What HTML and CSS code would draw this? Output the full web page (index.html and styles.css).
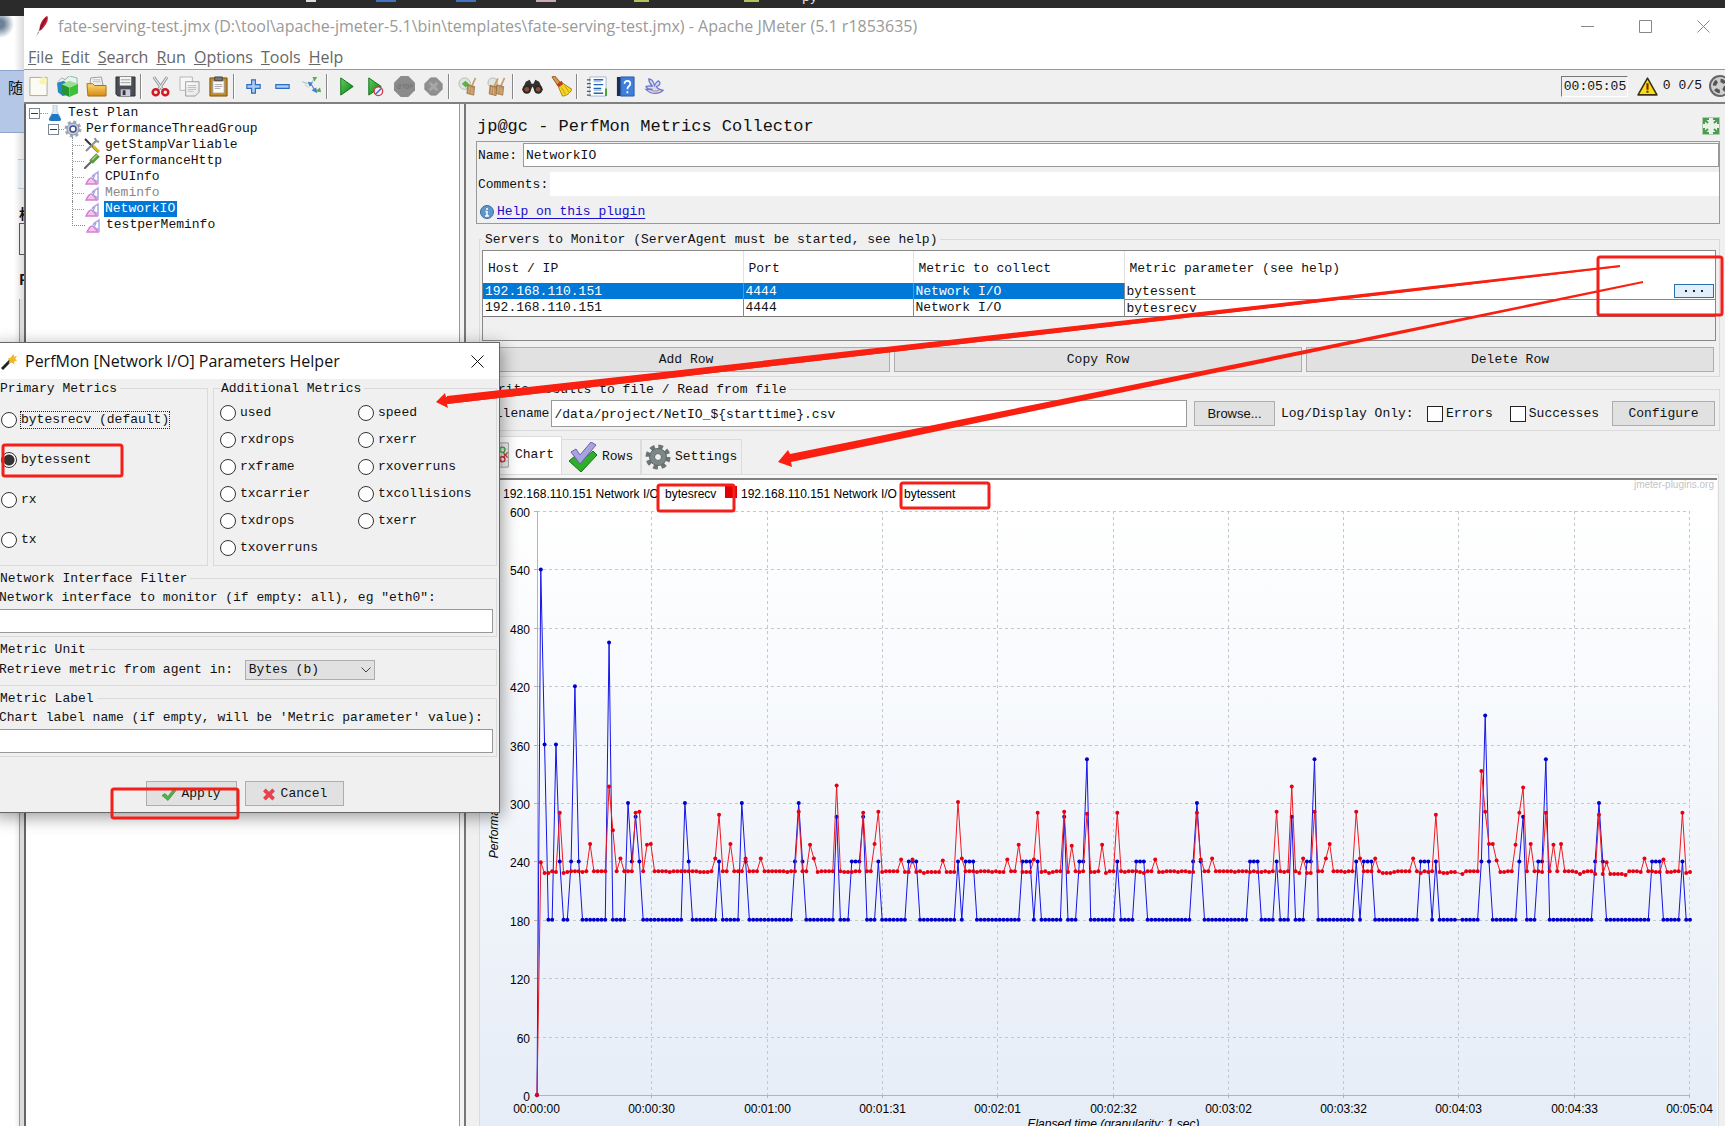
FILE: index.html
```html
<!DOCTYPE html>
<html lang="en">
<head>
<meta charset="utf-8">
<title>Apache JMeter - PerfMon Metrics Collector</title>
<link rel="stylesheet" href="styles.css">
</head>
<body>
<svg class="defs" aria-hidden="true">
  <defs>
    <linearGradient id="gGreen" x1="0" y1="0" x2="1" y2="1"><stop offset="0" stop-color="#5fd35f"/><stop offset="1" stop-color="#087a10"/></linearGradient>
    <linearGradient id="gGold" x1="0" y1="0" x2="0" y2="1"><stop offset="0" stop-color="#ffd873"/><stop offset="1" stop-color="#d58a12"/></linearGradient>
    <linearGradient id="gPage" x1="0" y1="0" x2="1" y2="1"><stop offset="0" stop-color="#fff"/><stop offset="1" stop-color="#e4e4e4"/></linearGradient>
    <symbol id="wave" viewBox="0 0 16 16"><path d="M2 15C3 13 5 9 7 9s4 3 6 6z" fill="#f3c6ee" stroke="#d77fd0" stroke-width="1.400"/><path d="M8 8c1-3 4-3 6-5v12M11 6l-2 4 5 3" fill="none" stroke="#a9a3e0" stroke-width="1.400"/></symbol>
    <symbol id="broom" viewBox="0 0 22 22"><path d="M18 1l-4 9" stroke="#c9a06a" stroke-width="2"/><path d="M9 9l8 2-1 10-8-2z" fill="#b98d57" stroke="#8a6234" stroke-width=".7"/><path d="M11 11l-1 8m3-7v8m2-7v7" stroke="#e0c193" stroke-width=".8"/></symbol>
  </defs>
</svg>

<header class="taskbar">
  <i class="chip light"></i><i class="chip blue"></i><i class="chip blue"></i><i class="chip pink"></i><i class="chip olive"></i><i class="chip olive"></i><span class="chip-text">py</span>
</header>

<div class="desk">
  <aside class="behind">
    <div class="behind-dark"></div>
    <div class="behind-top"></div>
    <div class="behind-blue">随</div>
    <div class="behind-gap"></div>
    <div class="behind-cell"></div>
    <div class="behind-word">相</div>
    <div class="behind-box"></div>
    <div class="behind-word">P</div>
    <div class="behind-rail"></div>
  </aside>

  <main class="window">
    <div class="titlebar">
      <svg class="feather" viewBox="0 0 14 22"><path d="M12 0c2 3 0 9-6 15l-2 1c-1-6 3-13 8-16z" fill="#c4202f"/><path d="M11 2L4 15" stroke="#6b1030" stroke-width="1.2"/><path d="M4 15l-3 6" stroke="#666" stroke-width="1" stroke-dasharray="2 1"/></svg>
      <span class="title">fate-serving-test.jmx (D:\tool\apache-jmeter-5.1\bin\templates\fate-serving-test.jmx) - Apache JMeter (5.1 r1853635)</span>
      <div class="caption">
        <button type="button" aria-label="Minimize"><svg viewBox="0 0 13 13"><path d="M0 6.500h13"/></svg></button>
        <button type="button" aria-label="Maximize"><svg viewBox="0 0 13 13"><path d="M.5.5h12v12H.5z"/></svg></button>
        <button type="button" aria-label="Close"><svg viewBox="0 0 13 13"><path d="M.5.5l12 12m0-12l-12 12"/></svg></button>
      </div>
    </div>
    <nav class="menu">
      <a href="#"><u>F</u>ile</a><a href="#"><u>E</u>dit</a><a href="#"><u>S</u>earch</a><a href="#"><u>R</u>un</a><a href="#"><u>O</u>ptions</a><a href="#"><u>T</u>ools</a><a href="#"><u>H</u>elp</a>
    </nav>

    <div class="toolbar">
      <button type="button" aria-label="New"><svg viewBox="0 0 22 22"><path d="M2 1.500h18v19H2z" fill="#fbfbf3" stroke="#a8a8a0"/><circle cx="16" cy="5" r="4" fill="#f7f3a2" opacity=".8"/></svg></button>
      <button type="button" aria-label="Templates"><svg viewBox="0 0 22 22"><path d="M0 7l7-2 4 3v12l-5 1-5-4z" fill="#2b86c9"/><path d="M1 6l4-4 4 2M8 4l5-4 8 2v9" fill="#eaf2ee" stroke="#8fb6a0"/><path d="M5 9l8 3v10l-8-4z" fill="#23972e"/><path d="M13 12l9-4v10l-9 4z" fill="#3fc03a"/><path d="M5 9l8-4 9 3-9 4z" fill="#9be08f"/></svg></button>
      <button type="button" aria-label="Open"><svg viewBox="0 0 22 22"><path d="M5 2l11-1 2 9H4z" fill="url(#gPage)" stroke="#999"/><path d="M7 4h8M7 6h8" stroke="#bbb"/><path d="M1 8h6l2 2h12v11H2z" fill="url(#gGold)" stroke="#a8700c"/></svg></button>
      <button type="button" aria-label="Save"><svg viewBox="0 0 22 22"><path d="M1 1h20v20H3l-2-2z" fill="#4b4d55" stroke="#2c2d33"/><path d="M5 1h12v9H5z" fill="#f5f5f5"/><path d="M6 4h10M6 7h10" stroke="#999"/><path d="M6 14h10v7H6z" fill="#ccd"/><path d="M8 15h3v5H8z" fill="#333"/></svg></button>
      <i class="sep"></i>
      <button type="button" aria-label="Cut"><svg viewBox="0 0 22 22"><path d="M4 1l9 13M18 1L9 14" stroke="#8b8f93" stroke-width="3"/><path d="M4 1l9 13M18 1L9 14" stroke="#e9ecee" stroke-width="1.2"/><circle cx="6" cy="17" r="3.200" fill="none" stroke="#cf1b24" stroke-width="2.600"/><circle cx="16" cy="17" r="3.200" fill="none" stroke="#cf1b24" stroke-width="2.600"/></svg></button>
      <button type="button" aria-label="Copy"><svg viewBox="0 0 22 22"><path d="M1 1h13v14H1z" fill="#f7f7f7" stroke="#b5b5b5"/><path d="M7 6h14v11l-4 4H7z" fill="url(#gPage)" stroke="#999"/><path d="M9 10h9M9 12h9M9 14h9M9 16h6" stroke="#bbb"/></svg></button>
      <button type="button" aria-label="Paste"><svg viewBox="0 0 22 22"><path d="M2 2h18v19H2z" fill="#c68a1c" stroke="#7d540a"/><path d="M5 5h12v13H5z" fill="#fafafa" stroke="#999"/><path d="M7 1h8v4H7z" fill="#777" stroke="#444"/><path d="M7 9h8M7 11h8M7 13h6" stroke="#aaa"/></svg></button>
      <i class="sep"></i>
      <button type="button" aria-label="Expand all"><svg viewBox="0 0 22 22"><path d="M9 4h4v5h5v4h-5v5H9v-5H4V9h5z" fill="#a9cdf5" stroke="#2e6cbf" stroke-width="1.200"/></svg></button>
      <button type="button" aria-label="Collapse all"><svg viewBox="0 0 22 22"><path d="M4 9h14v4H4z" fill="#a9cdf5" stroke="#2e6cbf" stroke-width="1.200"/></svg></button>
      <button type="button" aria-label="Toggle"><svg viewBox="0 0 22 22"><path d="M1 6l6 2M13 4l-3 5" stroke="#b9c6cf" stroke-width="1.200"/><path d="M12 1l5 0-3 5z" fill="#5fae4c"/><path d="M7 6l2 5 2-1 2 4-2 1 6 3-1-6-2 1-3-5 2-1z" fill="#3d82cf"/><path d="M15 16l6 1-1-5z" fill="#4fae4c"/><path d="M4 9l4 3" stroke="#cfc48a"/></svg></button>
      <i class="sep"></i>
      <button type="button" aria-label="Start"><svg viewBox="0 0 22 22"><path d="M5 2l13 9-13 9z" fill="url(#gGreen)" stroke="#0b6d12"/></svg></button>
      <button type="button" aria-label="Start no pauses"><svg viewBox="0 0 22 22"><path d="M4 2l13 9-13 9z" fill="url(#gGreen)" stroke="#0b6d12"/><circle cx="14" cy="16" r="4.500" fill="#eef" stroke="#d33" stroke-width="1.300"/><path d="M11 19l6-6" stroke="#46c" stroke-width="1.500"/></svg></button>
      <button type="button" aria-label="Stop" disabled><svg viewBox="0 0 22 22"><path d="M7 0h8l7 7v8l-7 7H7l-7-7V7z" fill="#8b8b8b"/><path d="M4 9h3v2H4v2h3m2-4h3m-1.500 0v4M14 9h-1v4h2V9zm3 4V9h2v2h-2" fill="none" stroke="#777"/></svg></button>
      <button type="button" aria-label="Shutdown" disabled><svg viewBox="0 0 22 22"><path d="M8 2h6l6 6v6l-6 6H8l-6-6V8z" fill="#8f8f8f" stroke="#858585"/><path d="M7 7l8 8m0-8l-8 8" stroke="#a8a8a8" stroke-width="3"/></svg></button>
      <i class="sep"></i>
      <button type="button" aria-label="Clear"><svg viewBox="0 0 22 22"><circle cx="7" cy="8" r="6" fill="#dfe5df" stroke="#b3b8b3"/><path d="M4 8l4-3 4 4-4 3z" fill="#5fb04d"/><use href="#broom" x="2" y="0" width="20" height="22"/></svg></button>
      <button type="button" aria-label="Clear all"><svg viewBox="0 0 22 22"><circle cx="6" cy="7" r="5" fill="#dfe5df" stroke="#b3b8b3"/><use href="#broom" x="-5" y="1" width="20" height="21"/><use href="#broom" x="2" y="0" width="20" height="22"/></svg></button>
      <i class="sep"></i>
      <button type="button" aria-label="Search"><svg viewBox="0 0 22 22"><path d="M4 6l4-2 2 4h2l2-4 4 2 4 9h-9l-2-4-2 4H0z" fill="#33302e"/><circle cx="5" cy="14" r="4.500" fill="#2b2826"/><circle cx="17" cy="14" r="4.500" fill="#2b2826"/><circle cx="5" cy="14" r="2.500" fill="#8a4f33"/><circle cx="17" cy="14" r="2.500" fill="#8a4f33"/></svg></button>
      <button type="button" aria-label="Reset search"><svg viewBox="0 0 22 22"><path d="M1 1l3-1 6 7-3 3z" fill="#d59a4c" stroke="#8f5a1a"/><path d="M6 9l5-4 2 3-5 4z" fill="#c23a20"/><path d="M8 12l5-4 9 6c-2 4-6 7-10 7z" fill="#f6d423" stroke="#a8830b"/><path d="M11 12l4 7m-1-9l5 7" stroke="#c79d10"/></svg></button>
      <i class="sep"></i>
      <button type="button" aria-label="Functions"><svg viewBox="0 0 22 22"><path d="M4 1h17v20H4z" fill="#fff" stroke="#9db8d8"/><path d="M8 4h10M8 9h10M8 13h8M8 18h10" stroke="#2464b4" stroke-width="1.500"/><path d="M8 6h8M8 15h8" stroke="#9ab8d8"/><path d="M1 4h4M1 8h4M1 12h4M1 16h4M1 20h4" stroke="#555" stroke-width="1.300"/><path d="M20 13h2v8h-2z" fill="#4a9b3c"/></svg></button>
      <button type="button" aria-label="Help"><svg viewBox="0 0 22 22"><path d="M2 1h5v20H2z" fill="#1e2f4f"/><path d="M6 1h14v20H6z" fill="#3f7fdc" stroke="#2a5aa8"/><path d="M10 8c0-4 6-4 6 0 0 3-3 2-3 6m0 2v2" fill="none" stroke="#fff" stroke-width="1.800"/></svg></button>
      <button type="button" aria-label="Plugins"><svg viewBox="0 0 22 22"><path d="M2 14c6 6 14 5 18 1-4-1-6-1-7-4 4-1 5-4 2-6-2 1-3 3-4 5C10 6 8 3 5 3c0 4 2 6 4 8-3-1-5-1-7 0 1 2 4 3 7 3z" fill="#d5dcf5" stroke="#6b78c9" stroke-width="1.300"/><path d="M7 15c3 1 6 1 9 0" stroke="#c07a7a" fill="none"/></svg></button>

      <div class="status">
        <output class="timer">00:05:05</output>
        <svg class="warn" viewBox="0 0 20 18"><path d="M10 1l9 16H1z" fill="#f8dd10" stroke="#3a3310" stroke-width="1.500" stroke-linejoin="round"/><path d="M10 6v6m0 1v2" stroke="#7a1f08" stroke-width="2"/></svg>
        <span>0</span>
        <span class="threads">0/5</span>
        <svg class="ball" viewBox="0 0 22 22"><circle cx="11" cy="11" r="10" fill="#cfcfcf" stroke="#666" stroke-width="2"/><circle cx="11" cy="11" r="5.500" fill="none" stroke="#555" stroke-width="3.500" stroke-dasharray="5 3.600"/></svg>
      </div>
    </div>

    <div class="body">
      <nav class="tree">
        <div class="node root"><b class="box"></b><i class="dots"></i>
          <svg class="ic-s" viewBox="0 0 14 16"><path d="M5 0h4v6l4 8q0 2-2 2H3q-2 0-2-2l4-8z" fill="#dce9f3" stroke="#a9bccb" stroke-width=".7"/><path d="M4 9h6l3 5q0 2-2 2H3q-2 0-2-2z" fill="#1f78c4"/></svg>
          <span>Test Plan</span></div>
        <div class="node group"><b class="box"></b><i class="dots short"></i>
          <svg class="ic-l" viewBox="0 0 18 18"><circle cx="9" cy="9" r="7" fill="none" stroke="#a2a9b6" stroke-width="3" stroke-dasharray="3 2.500"/><circle cx="9" cy="9" r="6" fill="#c6ccd8" stroke="#8890a2"/><circle cx="9" cy="9" r="3" fill="#fff" stroke="#3d4f9b" stroke-width="1.500"/></svg>
          <span>PerformanceThreadGroup</span></div>
        <ul class="kids">
          <li class="node"><svg class="ic" viewBox="0 0 16 16"><path d="M1 2l13 13" stroke="#333" stroke-width="2"/><path d="M9 9l6 6" stroke="#d9b521" stroke-width="3"/><path d="M2 14L13 3m-2-2l1 3 3 1" stroke="#8b9095" stroke-width="2" fill="none"/></svg><span>getStampVarliable</span></li>
          <li class="node"><svg class="ic" viewBox="0 0 16 16"><path d="M0 16l8-8" stroke="#666" stroke-width="2"/><path d="M7 9l7-7" stroke="#5c9a3f" stroke-width="5"/><path d="M8 7l5-5" stroke="#a6cf85" stroke-width="1.500"/></svg><span>PerformanceHttp</span></li>
          <li class="node"><svg class="ic"><use href="#wave"/></svg><span>CPUInfo</span></li>
          <li class="node off"><svg class="ic"><use href="#wave"/></svg><span>Meminfo</span></li>
          <li class="node on"><svg class="ic"><use href="#wave"/></svg><span>NetworkIO</span></li>
          <li class="node"><svg class="ic"><use href="#wave"/></svg><span>testperMeminfo</span></li>
        </ul>
      </nav>
      <div class="splitter"></div>

      <section class="content">
        <div class="head">
          <h1>jp@gc - PerfMon Metrics Collector</h1>
          <svg class="expand" viewBox="0 0 18 18"><path d="M.5.5h17v17H.5z" fill="#e9f3e9" stroke="#a9cfa9"/><path d="M2 7V2h5M2 2l4 4M11 2h5v5M16 2l-4 4M2 11v5h5M2 16l4-4M16 11v5h-5M16 16l-4-4" fill="none" stroke="#4f9a52" stroke-width="2"/></svg>
        </div>
        <div class="namebox">
          <div class="nrow"><label for="name">Name:</label><input id="name" class="field" type="text" value="NetworkIO"></div>
          <div class="nrow"><label for="comments">Comments:</label><input id="comments" class="plain" type="text"></div>
          <div class="hrow"><svg class="info" viewBox="0 0 14 14"><circle cx="7" cy="7" r="6.500" fill="#5f95c8" stroke="#3c6c9f"/><path d="M7 3v2m0 1v5M5.500 6.500H7M5 11h4" stroke="#fff" stroke-width="1.500"/></svg><a href="#">Help on this plugin</a></div>
        </div>

        <fieldset class="servers">
          <legend>Servers to Monitor (ServerAgent must be started, see help)</legend>
          <div class="grid">
            <table>
              <thead><tr><th class="c-host">Host / IP</th><th class="c-port">Port</th><th class="c-metric">Metric to collect</th><th>Metric parameter (see help)</th></tr></thead>
              <tbody>
                <tr class="sel"><td>192.168.110.151</td><td>4444</td><td>Network I/O</td><td class="param"><div class="cell">bytessent<button type="button" class="more" aria-label="Edit parameter"><i></i><i></i><i></i></button></div></td></tr>
                <tr><td>192.168.110.151</td><td>4444</td><td>Network I/O</td><td>bytesrecv</td></tr>
              </tbody>
            </table>
          </div>
          <div class="rowbtns"><button type="button">Add Row</button><button type="button">Copy Row</button><button type="button">Delete Row</button></div>
        </fieldset>

        <fieldset class="filebox">
          <legend>Write results to file / Read from file</legend>
          <div class="filerow">
            <label for="file">Filename</label><input id="file" class="field" type="text" value="/data/project/NetIO_${starttime}.csv">
            <button type="button" class="browse">Browse...</button>
            <span class="only">Log/Display Only:</span>
            <label class="check err"><input type="checkbox">Errors</label>
            <label class="check suc"><input type="checkbox">Successes</label>
            <button type="button" class="conf">Configure</button>
          </div>
        </fieldset>

        <div class="tabs">
          <button type="button" class="tab active"><svg viewBox="0 0 26 30"><path d="M2 1h23v28H2z" fill="#f3f3f3" stroke="#999"/><path d="M2 8h23M2 15h23M2 22h23M9 1v28M17 1v28" stroke="#d0d0d0"/><path d="M4 24l7-8 6 6M19 12l5 6m0-6l-5 6" fill="none" stroke="#c33" stroke-width="1.500"/><circle cx="18" cy="9" r="3" fill="none" stroke="#4a4" stroke-width="1.500"/><circle cx="18" cy="20" r="3" fill="none" stroke="#c33" stroke-width="1.500"/></svg>Chart</button>
          <button type="button" class="tab rows"><svg viewBox="0 0 30 30"><path d="M1 19l6-5 5 6L25 9l4 4-16 17z" fill="#2fae2b" stroke="#14701a"/><path d="M3 10l5-3 4 6L23 0l5 3-16 19z" fill="#a9a2e0" stroke="#6a62a8"/></svg>Rows</button>
          <button type="button" class="tab settings"><svg viewBox="0 0 26 26"><circle cx="13" cy="13" r="10" fill="none" stroke="#6c7575" stroke-width="5" stroke-dasharray="4.500 3.350"/><circle cx="13" cy="13" r="8.500" fill="#7e8787" stroke="#5f6868"/><circle cx="13" cy="13" r="3.500" fill="#f0f0f0" stroke="#5f6868"/></svg>Settings</button>
        </div>
        <div class="chartpane"><svg id="chart" class="chart" role="img" aria-label="Performance metrics over elapsed time"></svg></div>
      </section>
    </div>
  </main>
</div>

<form class="dialog" role="dialog" aria-label="PerfMon Parameters Helper">
  <div class="dlg-title">
    <svg class="wand" viewBox="0 0 18 18"><path d="M1 17l9-9" stroke="#222" stroke-width="3"/><path d="M13 1l1 3 3-1-2 3 2 2-3 1v3l-3-2-3 1 1-3-2-2 3-1z" fill="#f3b52a"/></svg>
    <span>PerfMon [Network I/O] Parameters Helper</span>
    <button type="button" aria-label="Close"><svg viewBox="0 0 13 13"><path d="M.5.5l12 12m0-12l-12 12"/></svg></button>
  </div>
  <div class="dlg-body">
    <div class="pair">
      <fieldset class="prim"><legend>Primary Metrics</legend>
        <label><input type="radio" name="m"><span class="focus">bytesrecv (default)</span></label>
        <label><input type="radio" name="m" checked><span>bytessent</span></label>
        <label><input type="radio" name="m"><span>rx</span></label>
        <label><input type="radio" name="m"><span>tx</span></label>
      </fieldset>
      <fieldset class="addl"><legend>Additional Metrics</legend>
        <div class="two">
          <label><input type="radio" name="m"><span>used</span></label><label><input type="radio" name="m"><span>speed</span></label>
          <label><input type="radio" name="m"><span>rxdrops</span></label><label><input type="radio" name="m"><span>rxerr</span></label>
          <label><input type="radio" name="m"><span>rxframe</span></label><label><input type="radio" name="m"><span>rxoverruns</span></label>
          <label><input type="radio" name="m"><span>txcarrier</span></label><label><input type="radio" name="m"><span>txcollisions</span></label>
          <label><input type="radio" name="m"><span>txdrops</span></label><label><input type="radio" name="m"><span>txerr</span></label>
          <label><input type="radio" name="m"><span>txoverruns</span></label>
        </div>
      </fieldset>
    </div>
    <fieldset class="stack"><legend>Network Interface Filter</legend>
      <label for="nif">Network interface to monitor (if empty: all), eg "eth0":</label>
      <input id="nif" class="field" type="text">
    </fieldset>
    <fieldset class="unit"><legend>Metric Unit</legend>
      <label for="unit">Retrieve metric from agent in:</label>
      <span class="drop"><select id="unit"><option>Bytes (b)</option></select><svg viewBox="0 0 10 6"><path d="M.5.5L5 5l4.500-4.500" fill="none" stroke="#444"/></svg></span>
    </fieldset>
    <fieldset class="stack"><legend>Metric Label</legend>
      <label for="mlabel">Chart label name (if empty, will be 'Metric parameter' value):</label>
      <input id="mlabel" class="field" type="text">
    </fieldset>
    <div class="dlg-btns">
      <button type="button" class="apply"><svg viewBox="0 0 14 12"><path d="M0 7l3-2 3 3 6-8 2 2-8 10z" fill="#4fb548" stroke="#2a7f2a" stroke-width=".6"/></svg>Apply</button>
      <button type="button" class="cancel"><svg viewBox="0 0 14 14"><path d="M2 2l10 10M12 2L2 12" stroke="#e8404c" stroke-width="4"/></svg>Cancel</button>
    </div>
  </div>
</form>

<svg class="marks" aria-hidden="true">
  <g fill="none" stroke="#f51f1a" stroke-width="3">
    <rect x="1598" y="257" width="124" height="58" rx="2"/>
    <rect x="658" y="485" width="76" height="26" rx="2"/>
    <rect x="901" y="483" width="88" height="25" rx="2"/>
    <rect x="3" y="445" width="119" height="31" rx="2"/>
    <rect x="112" y="789" width="126" height="29" rx="2"/>
  </g>
  <g fill="#f92012">
    <path d="M1620 266L446 397l-1-4-9 9 12 6-1-4L1620 267z"/>
    <path d="M1620 265L1245 307 447 396v8l798-93L1620 267z"/>
    <path d="M1643 281L1300 351 790 454l-2-4-10 12 14 5-1-5 509-107L1643 283z"/>
  </g>
</svg>
<script src="chart.js"></script>
</body>
</html>
```
FILE: styles.css
```css
* { box-sizing: border-box; }

body {
  margin: 0;
  height: 100vh;
  overflow: hidden;
  display: flex;
  flex-direction: column;
  background: #fff;
  color: #111;
  font: 13px/16px "Liberation Mono", monospace;
}

button, input, select { font: inherit; color: inherit; margin: 0; }
fieldset { margin: 0; padding: 0; min-width: 0; border: 1px solid #dadada; }
legend { padding: 1px 3px 0; height: 16px; }
.defs { position: absolute; width: 0; height: 0; }

/* strip of the desktop above and beside the window */
.taskbar { flex: 0 0 8px; background: #2b2b2b; display: flex; overflow: hidden; padding-left: 306px; }
.chip { width: 20px; height: 2px; margin-right: 60px; background: #4472c4; }
.chip.light { width: 10px; background: #ddd; }
.chip.pink { background: #c9a9b4; margin-right: 78px; }
.chip.olive { width: 15px; background: #b5c25a; margin-right: 95px; }
.chip.olive + .chip-text { margin-left: -52px; }
.chip-text { color: #eee; line-height: 1px; margin-top: -3px; }
.desk { flex: 1; display: flex; min-height: 0; }
.behind { flex: 0 0 24px; display: flex; flex-direction: column; overflow: hidden; background: linear-gradient(90deg, #fff 14px, #dcdcdc); }
.behind-dark { height: 8px; background: #2b2b2b; }
.behind-top { height: 54px; background: radial-gradient(circle at 0 8px, #6b8296 4px, #fff0 14px); }
.behind-blue { height: 63px; background: #b4c7e7; border: 1px solid #8fa3c8; border-width: 1px 0; padding: 8px 0 0 8px; white-space: nowrap; font: 15px/16px "Noto Sans CJK SC", sans-serif; }
.behind-gap { height: 26px; }
.behind-cell { height: 30px; margin-left: 18px; background: #dfe6ec; border: 1px solid #b9c3cc; border-width: 1px 0; }
.behind-word { height: 34px; padding: 14px 0 0 19px; font: bold 14px/20px "Noto Sans CJK SC", sans-serif; }
.behind-box { height: 32px; margin-left: 19px; border: 1px solid #555; border-right: 0; background: #e6e6e6; }
.behind-rail { flex: 1; margin: 10px 0 0 19px; border-left: 1px solid #999; background: #dcdcdc; }

.window { flex: 1; min-width: 0; display: flex; flex-direction: column; background: #fff; }
.titlebar { flex: 0 0 36px; display: flex; align-items: center; padding-left: 12px; font: 16px/20px "Open Sans", sans-serif; color: #9a9a9a; }
.feather { width: 13px; height: 22px; margin-right: 9px; }
.title { flex: 1; white-space: nowrap; overflow: hidden; }
.caption { display: flex; gap: 45px; padding-right: 15px; }
.caption button, .dlg-title button { border: 0; background: none; padding: 0; height: 13px; width: 13px; }
.caption svg { display: block; width: 13px; height: 13px; fill: none; stroke: #888; }
.menu { flex: 0 0 26px; display: flex; gap: 8px; padding: 3px 0 0 4px; border-bottom: 1px solid #999; font: 16px/20px "Open Sans", sans-serif; }
.menu a { color: #666; text-decoration: none; }

.toolbar { flex: 0 0 34px; display: flex; align-items: center; background: #f0f0f0; border-bottom: 2px solid #808080; }
.toolbar button { width: 29px; height: 24px; padding: 0; border: 0; background: none; display: grid; place-items: center; }
.toolbar button svg { width: 21px; height: 21px; }
.sep { width: 6px; height: 25px; border-left: 1px solid #888; background: linear-gradient(90deg, #fff 1px, #fff0 1px); }
.status { margin-left: auto; display: flex; align-items: center; overflow: hidden; }
.timer { width: 67px; height: 21px; padding: 2px 0 0 2px; border: 1px solid #777; border-right-color: #fff; border-bottom-color: #fff; margin-right: 9px; }
.warn { width: 21px; height: 19px; margin-right: 5px; }
.threads { margin: 0 7px 0 8px; }
.ball { width: 22px; height: 22px; margin-right: -6px; }

.body { flex: 1; min-height: 0; display: flex; }
.tree { flex: 0 0 436px; background: #fff; border-left: 2px solid #666; border-right: 1px solid #999; padding-top: 1px; }
.splitter { flex: 0 0 4px; background: #f4f4f4; }
.node { display: flex; align-items: center; height: 16px; white-space: nowrap; }
.root { padding-left: 3px; }
.group { padding-left: 22px; }
.box { width: 11px; height: 11px; border: 1px solid #7c8794; background: linear-gradient(#334, #334) center / 7px 1px no-repeat; }
.dots { width: 8px; border-top: 1px dotted #999; }
.dots.short { width: 5px; }
.ic-s { width: 14px; height: 16px; margin-right: 6px; }
.ic-l { width: 18px; height: 18px; margin-right: 4px; }
.kids { list-style: none; margin: 0 0 0 46px; padding: 0; }
.kids .node { border-left: 1px dotted #888; }
.kids .node::before { content: ""; width: 11px; border-top: 1px dotted #999; }
.kids .node:last-child { border-left-color: #fff; }
.kids .node:last-child::before { align-self: flex-start; height: 8px; width: 12px; margin-left: -1px; border: 1px dotted #888; border-width: 0 0 1px 1px; }
.ic { width: 16px; height: 16px; margin-right: 4px; }
.kids .node span { padding: 0 2px 0 1px; }
.off { color: #888; }
.on span { background: #0078d7; color: #fff; }

.content { flex: 1; min-width: 0; display: flex; flex-direction: column; background: #f0f0f0; border-left: 2px solid #777; padding: 0 5px 0 10px; }
.head { flex: 0 0 37px; display: flex; align-items: center; justify-content: space-between; padding-top: 7px; }
h1 { margin: 0; padding: 2px 0 0 1px; font-size: 17px; line-height: 20px; font-weight: normal; }
.expand { width: 18px; height: 18px; }
.field { min-width: 0; border: 1px solid #999; background: #fff; padding: 1px 2px 0; outline: 0; }
.namebox { height: 83px; border: 1px solid #999; padding: 1px 0 0 1px; display: flex; flex-direction: column; }
.nrow { display: flex; align-items: center; height: 24px; margin-bottom: 5px; }
.nrow label { padding: 2px 2px 0 0; }
.nrow .field { flex: 1; height: 24px; margin-left: 4px; }
.plain { flex: 1; height: 24px; border: 0; padding: 0; }
.hrow { display: flex; align-items: center; padding-left: 2px; height: 22px; }
.info { width: 14px; height: 14px; margin-right: 3px; }
.hrow a { color: #1a0dcc; text-underline-offset: 3px; }

.servers { margin: 7px 0 0 3px; padding: 3px 3px 4px 2px; height: 146px; }
.grid { height: 91px; border: 1px solid #888; }
table { width: 100%; border-collapse: collapse; table-layout: fixed; background: #fff; border-bottom: 1px solid #777; }
th, td { padding: 1px 0 0; text-align: left; font-weight: normal; height: 16px; line-height: 15px; white-space: nowrap; overflow: hidden; }
th { height: 32px; padding: 3px 0 0 5px; border-right: 1px solid #e2e2e2; }
.c-host { width: 260px; }
.c-port { width: 170px; }
.c-metric { width: 211px; }
td { padding-left: 2px; border-right: 1px solid #888; }
th:last-child, td:last-child { border-right: 0; }
.sel td { background: #0078d7; color: #fff; }
.sel .param { background: #fff; color: #111; border-bottom: 1px solid #888; }
.cell { display: flex; justify-content: space-between; height: 14px; }
.more { width: 40px; padding: 0; display: flex; gap: 6px; align-items: center; justify-content: center; border: 1px solid #2a6fae; background: #e0effb; margin-right: 1px; }
.more i { width: 2px; height: 2px; background: #222; }
.rowbtns { display: grid; grid-template-columns: repeat(3, 1fr); gap: 4px; margin-top: 6px; padding: 0 2px 0 0; }
.rowbtns button, .browse, .conf, .dlg-btns button { height: 25px; padding: 1px 0 0; border: 1px solid #adadad; background: #e1e1e1; }

.filebox { margin: 4px 0 0 3px; height: 50px; padding: 3px 4px 0 7px; }
.filerow { display: flex; align-items: center; height: 27px; white-space: nowrap; }
.filerow .field { flex: 1; height: 27px; margin: 0 7px 0 2px; }
.browse { width: 81px; margin-right: 6px; font: 13px/16px "Liberation Sans", sans-serif; }
.only { width: 137px; }
.check { display: flex; align-items: center; gap: 3px; }
.err { margin: 0 17px 0 9px; }
.suc { margin-right: 13px; }
.check input { appearance: none; width: 16px; height: 16px; border: 1px solid #222; background: #fff; }
.conf { width: 103px; }

.tabs { display: flex; align-items: flex-end; height: 43px; margin-left: 3px; }
.tab { display: flex; align-items: center; height: 35px; padding: 0 3px; border: 1px solid #dcdcdc; border-bottom: 0; background: #f0f0f0; }
.tab.active { height: 38px; width: 83px; justify-content: flex-end; padding: 0 7px 2px 0; background: #fff; }
.tab.rows { width: 79px; border-left: 0; padding-left: 6px; }
.tab.settings { width: 101px; }
.tab svg { width: 26px; height: 26px; margin-right: 4px; }
.tab.rows svg { width: 30px; height: 30px; }
.chartpane { flex: 1; min-height: 0; overflow: hidden; margin: 0 1px 0 3px; padding: 3px 1px 0 0; border: 1px solid #dcdcdc; border-bottom: 0; background: #f8f8f8; }
.chart { display: block; width: 100%; height: 660px; border-top: 2px solid #808080; background: linear-gradient(#fff, #fff 30px, #e6edf7 640px); font: 12px "Liberation Sans", sans-serif; }

/* parameters helper window, floating over the main one */
.dialog { position: absolute; left: -8px; top: 342px; width: 508px; border: 1px solid #666; background: #f0f0f0; box-shadow: 2px 4px 16px #0006; }
.dlg-title { height: 36px; display: flex; align-items: center; background: #fff; padding: 0 15px 0 8px; font: 16px/20px "Open Sans", sans-serif; }
.dlg-title span { flex: 1; white-space: nowrap; }
.wand { width: 17px; height: 17px; margin-right: 7px; }
.dlg-title button svg { display: block; width: 13px; height: 13px; fill: none; stroke: #111; }
.dlg-body { padding: 1px 2px 6px 1px; white-space: nowrap; }
.pair { display: grid; grid-template-columns: 214px 1fr; gap: 5px; height: 186px; }
.dlg-body fieldset { padding: 3px 3px 3px 4px; }
.dlg-body legend { padding: 1px 3px 0 1px; }
.dlg-body .addl { padding-left: 6px; }
.prim label { display: flex; align-items: center; height: 40px; padding: 2px 0 0 2px; gap: 4px; }
.two { display: grid; grid-template-columns: 138px 1fr; }
.two label { display: flex; align-items: center; height: 27px; gap: 4px; }
input[type="radio"] { appearance: none; flex: 0 0 16px; height: 16px; border: 1px solid #333; border-radius: 50%; background: #fff; }
input[type="radio"]:checked { background: radial-gradient(circle, #333 5px, #fff 6px); }
.focus { outline: 1px dotted #222; }
.stack { height: 67px; margin-top: 4px; display: flex; flex-direction: column; }
.stack label { display: block; height: 20px; padding-top: 1px; }
.stack .field { display: block; width: 100%; height: 24px; }
.unit { height: 45px; margin-top: 4px; }
.unit label { display: inline-block; width: 238px; }
.drop { display: inline-flex; position: relative; }
.drop select { appearance: none; width: 130px; height: 20px; padding: 0 3px; border: 1px solid #adadad; border-radius: 0; background: #e1e1e1; }
.drop svg { position: absolute; right: 4px; top: 7px; width: 10px; height: 6px; }
.dlg-btns { display: flex; gap: 8px; padding: 24px 0 0 152px; }
.dlg-btns button { display: flex; align-items: center; justify-content: center; gap: 5px; }
.dlg-btns svg { width: 14px; height: 13px; }
.apply { width: 91px; }
.cancel { width: 99px; }

/* red annotation strokes */
.marks { position: absolute; left: 0; top: 0; width: 100%; height: 100%; pointer-events: none; }
```
FILE: chart.js
```js
// One sample per second; only samples that leave the base line are listed.
const LAST = 304;
const MISSING = 243;

const blue = new Array(LAST + 1).fill(180);
const red = new Array(LAST + 1).fill(230);

Object.assign(blue, {
  0: 0, 1: 540, 2: 360, 5: 360, 6: 240, 9: 240, 10: 420, 11: 240, 19: 465,
  24: 300, 25: 240, 26: 286, 27: 240, 39: 300, 40: 240, 48: 240, 54: 300, 55: 240,
  68: 240, 69: 300, 70: 240, 79: 286, 83: 240, 84: 240, 85: 240, 86: 286, 90: 240,
  98: 240, 99: 240, 100: 240, 111: 240, 113: 240, 114: 240, 115: 240,
  128: 240, 129: 240, 130: 240, 132: 240, 139: 286, 143: 240, 144: 240, 145: 345,
  153: 240, 158: 240, 159: 240, 160: 240, 173: 240, 174: 300, 175: 240,
  188: 240, 189: 240, 190: 240, 195: 240, 199: 286, 203: 240, 204: 240, 205: 345,
  216: 240, 218: 240, 219: 240, 220: 240, 233: 240, 234: 240, 235: 240, 237: 240,
  249: 240, 250: 390, 251: 240, 259: 240, 260: 286, 264: 240, 265: 240, 266: 345,
  279: 240, 280: 300, 281: 240, 294: 240, 295: 240, 296: 240, 302: 240
});

Object.assign(red, {
  0: 0, 1: 239, 2: 228, 3: 228, 5: 229, 6: 290, 7: 228, 8: 229, 12: 229, 14: 258,
  19: 317, 20: 272, 22: 243, 26: 290, 27: 291, 29: 257, 30: 258, 35: 229,
  43: 229, 44: 229, 45: 229, 47: 243, 48: 288, 51: 258, 55: 243, 59: 243, 66: 229,
  69: 291, 72: 257, 73: 243, 74: 229, 79: 318, 81: 229, 82: 229, 83: 229, 86: 290,
  89: 258, 90: 291, 91: 229, 96: 242, 97: 229, 98: 229, 99: 242, 100: 229, 102: 228,
  103: 229, 104: 229, 105: 229, 106: 229, 107: 241, 108: 229, 109: 229, 110: 229,
  111: 301, 112: 243, 116: 229, 120: 229, 122: 229, 123: 229, 124: 242, 127: 257,
  128: 229, 129: 229, 130: 229, 131: 242, 132: 290, 133: 229, 135: 228, 136: 229,
  139: 291, 140: 229, 141: 256, 143: 229, 145: 289, 146: 229, 147: 229, 149: 257,
  150: 228, 153: 290, 155: 229, 159: 229, 160: 228, 163: 242, 164: 229, 165: 229,
  169: 229, 172: 229, 173: 229, 174: 290, 175: 242, 178: 243, 184: 229, 188: 229,
  190: 229, 191: 229, 193: 229, 195: 291, 197: 229, 199: 317, 201: 228, 202: 243,
  203: 228, 204: 228, 205: 291, 208: 243, 209: 258, 213: 229, 216: 291, 217: 243,
  221: 243, 223: 228, 224: 228, 225: 228, 226: 229, 231: 243, 233: 228, 235: 229,
  237: 288, 238: 229, 239: 228, 240: 228, 241: 229, 242: 229, 244: 227,
  249: 333, 250: 291, 251: 258, 252: 258, 253: 241, 254: 229, 255: 229, 258: 257,
  259: 290, 260: 316, 262: 258, 265: 229, 266: 290, 268: 257, 270: 258, 274: 229,
  275: 227, 276: 229, 279: 227, 280: 288, 281: 227, 282: 239, 283: 227, 284: 227,
  285: 227, 286: 227, 287: 226, 291: 229, 292: 243, 295: 229, 296: 229, 297: 242,
  298: 229, 299: 229, 302: 290, 303: 228, 304: 229
});

const svg = document.getElementById("chart");

function add(tag, attrs, text) {
  const el = document.createElementNS("http://www.w3.org/2000/svg", tag);
  for (const key in attrs) el.setAttribute(key, attrs[key]);
  if (text !== undefined) el.textContent = text;
  svg.appendChild(el);
}

function draw() {
  svg.replaceChildren();
  const left = 57;
  const right = svg.clientWidth - 27;
  const top = 31;
  const bottom = 615;
  const x = i => left + (right - left) * i / LAST;
  const y = v => bottom - (bottom - top) * v / 600;
  const grid = { stroke: "#c3c8d0", "stroke-dasharray": "3 3" };

  for (let v = 0; v <= 600; v += 60) {
    const py = Math.round(y(v)) + 0.5;
    if (v) add("line", { x1: left, x2: right, y1: py, y2: py, ...grid });
    add("line", { x1: left - 3, x2: left, y1: py, y2: py, stroke: "#b0b4bc" });
    add("text", { x: left - 7, y: py + 5, "text-anchor": "end" }, v);
  }
  const times = ["00:00:00", "00:00:30", "00:01:00", "00:01:31", "00:02:01", "00:02:32",
    "00:03:02", "00:03:32", "00:04:03", "00:04:33", "00:05:04"];
  times.forEach((t, k) => {
    const px = Math.round(x(LAST * k / 10)) - 0.5;
    if (k) add("line", { x1: px, x2: px, y1: top, y2: bottom, ...grid });
    add("line", { x1: px, x2: px, y1: bottom, y2: bottom + 3, stroke: "#b0b4bc" });
    add("text", { x: px, y: bottom + 18, "text-anchor": "middle" }, t);
  });
  add("path", { d: `M${left + 0.5} ${top}V${bottom + 0.5}H${right}`, fill: "none", stroke: "#b0b4bc" });

  for (const [data, color, dot] of [[blue, "#1414e6", "#0000c8"], [red, "#f01820", "#e60012"]]) {
    const pts = data.map((v, i) => [x(i), y(v), i]).filter(p => p[2] !== MISSING);
    add("polyline", { points: pts.map(p => `${p[0]},${p[1]}`).join(" "), fill: "none", stroke: color });
    for (const p of pts) add("circle", { cx: p[0], cy: p[1], r: 2, fill: dot });
  }

  add("rect", { x: 7, y: 6, width: 12, height: 12, fill: "#0000d0" });
  add("text", { x: 23, y: 18 }, "192.168.110.151 Network I/O");
  add("text", { x: 185, y: 18 }, "bytesrecv");
  add("rect", { x: 245, y: 6, width: 12, height: 12, fill: "#e00000" });
  add("text", { x: 261, y: 18 }, "192.168.110.151 Network I/O");
  add("text", { x: 424, y: 18 }, "bytessent");
  add("text", { x: right + 24, y: 8, "text-anchor": "end", fill: "#c4c4c4", "font-size": 10 }, "jmeter-plugins.org");
  add("text", { x: (left + right) / 2, y: bottom + 33, "text-anchor": "middle", "font-style": "italic" }, "Elapsed time (granularity: 1 sec)");
  add("text", { transform: "translate(18 323) rotate(-90)", "text-anchor": "middle", "font-style": "italic" }, "Performance Metrics");
}

draw();
addEventListener("resize", draw);
```
